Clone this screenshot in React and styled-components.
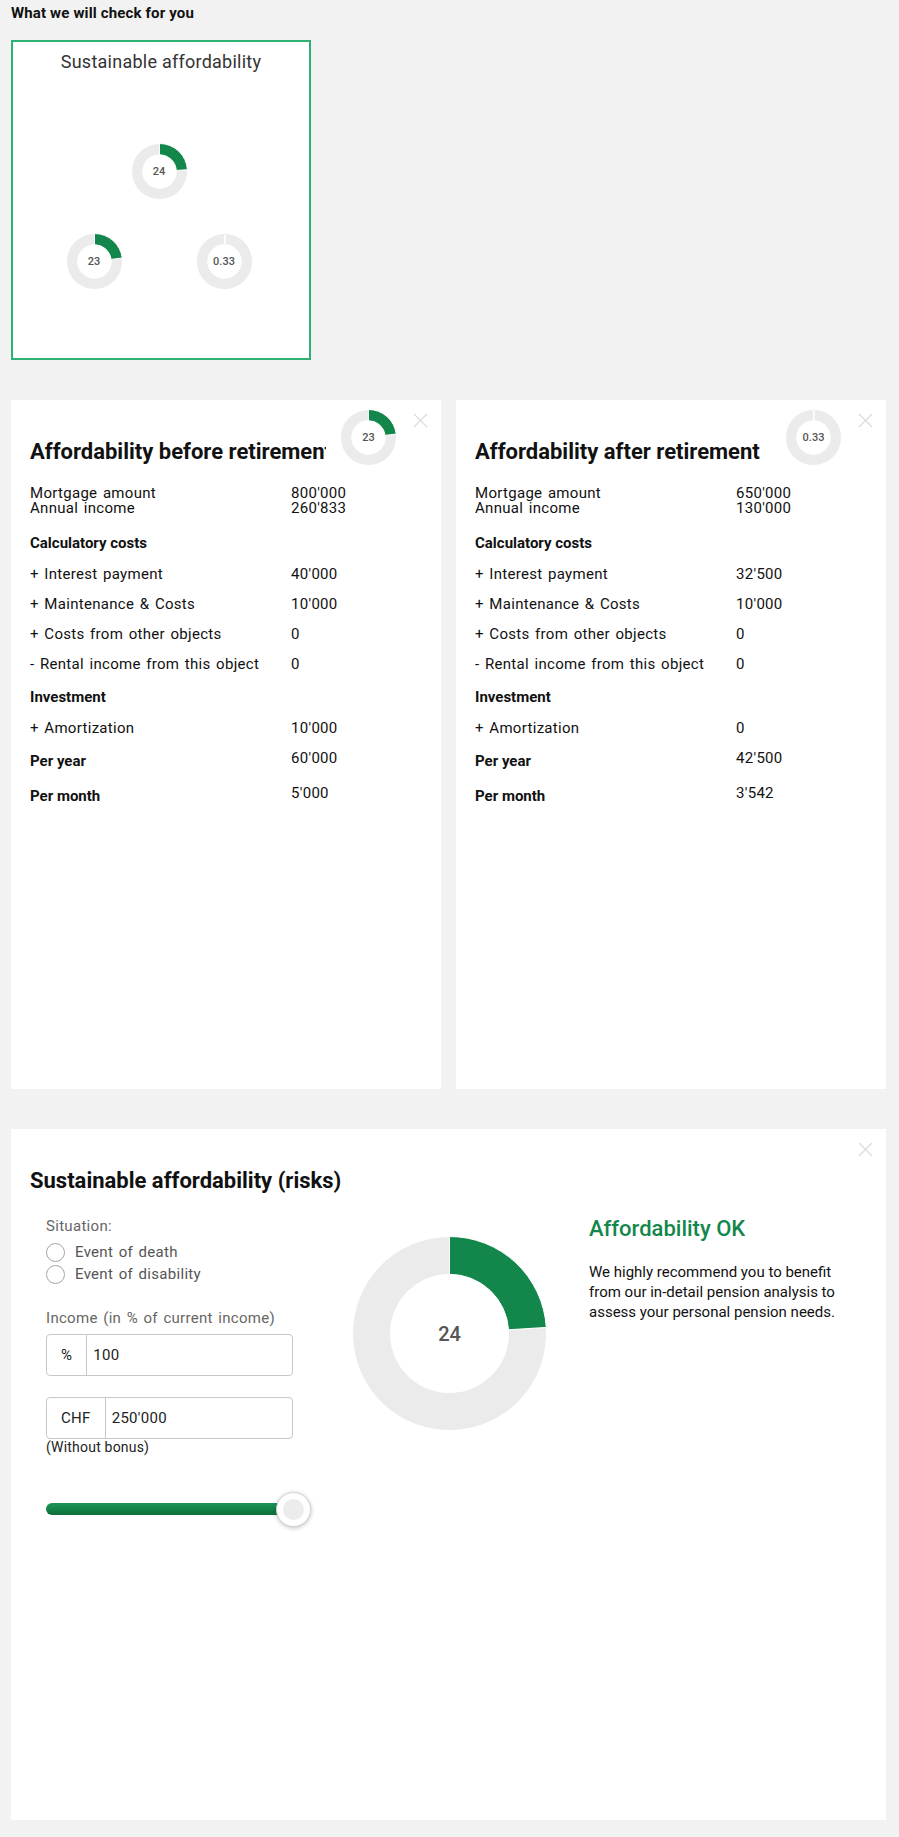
import React from "react";
import styled, { createGlobalStyle } from "styled-components";

const GREEN = "#13874b";
const RING = "#ebebeb";

const GlobalStyle = createGlobalStyle`
  html, body { margin: 0; padding: 0; background: #f2f2f2; }
  body { font-family: Roboto, "Liberation Sans", sans-serif; color: #111; }
  * { box-sizing: border-box; }
`;

const pt = (cx, cy, rad, deg) => {
  const a = (deg * Math.PI) / 180;
  return [cx + rad * Math.sin(a), cy - rad * Math.cos(a)];
};

function segment(cx, cy, ro, ri, a0, a1) {
  const large = a1 - a0 > 180 ? 1 : 0;
  const [x0, y0] = pt(cx, cy, ro, a0);
  const [x1, y1] = pt(cx, cy, ro, a1);
  const [x2, y2] = pt(cx, cy, ri, a1);
  const [x3, y3] = pt(cx, cy, ri, a0);
  return `M${x0} ${y0} A${ro} ${ro} 0 ${large} 1 ${x1} ${y1} L${x2} ${y2} A${ri} ${ri} 0 ${large} 0 ${x3} ${y3}Z`;
}

function Donut({ value, size, ratio = 0.6, fontSize, className }) {
  const c = size / 2;
  const ro = c - 0.5;
  const ri = ro * ratio;
  const angle = (Math.min(value, 100) / 100) * 360;
  return (
    <DonutWrap $size={size} className={className}>
      <svg width={size} height={size} viewBox={`0 0 ${size} ${size}`}>
        <path d={segment(c, c, ro, ri, angle, 359.99)} fill={RING} stroke="#fff" strokeWidth="1" />
        <path d={segment(c, c, ro, ri, 0, Math.max(angle, 0.01))} fill={GREEN} stroke="#fff" strokeWidth="1" />
      </svg>
      <DonutLabel $fontSize={fontSize}>{value}</DonutLabel>
    </DonutWrap>
  );
}

function CloseIcon() {
  return (
    <svg width="15" height="15" viewBox="0 0 15 15">
      <path d="M1 1 L14 14 M14 1 L1 14" stroke="#dcdcdc" strokeWidth="1.3" fill="none" />
    </svg>
  );
}

const rowsBefore = {
  title: "Affordability before retirement",
  score: 23,
  mortgage: "800'000",
  income: "260'833",
  interest: "40'000",
  maintenance: "10'000",
  other: "0",
  rental: "0",
  amortization: "10'000",
  year: "60'000",
  month: "5'000",
};

const rowsAfter = {
  title: "Affordability after retirement",
  score: 0.33,
  mortgage: "650'000",
  income: "130'000",
  interest: "32'500",
  maintenance: "10'000",
  other: "0",
  rental: "0",
  amortization: "0",
  year: "42'500",
  month: "3'542",
};

function AffordabilityCard({ data }) {
  return (
    <Card>
      <CornerDonut value={data.score} size={57} fontSize={11} />
      <CloseButton><CloseIcon /></CloseButton>
      <CardTitle>{data.title}</CardTitle>
      <Pair>
        <span>Mortgage amount</span>
        <span>{data.mortgage}</span>
        <span>Annual income</span>
        <span>{data.income}</span>
      </Pair>
      <SectionHead>Calculatory costs</SectionHead>
      <Row><span>+ Interest payment</span><span>{data.interest}</span></Row>
      <Row><span>+ Maintenance &amp; Costs</span><span>{data.maintenance}</span></Row>
      <Row><span>+ Costs from other objects</span><span>{data.other}</span></Row>
      <Row><span>- Rental income from this object</span><span>{data.rental}</span></Row>
      <SectionHead $top={2}>Investment</SectionHead>
      <Row><span>+ Amortization</span><span>{data.amortization}</span></Row>
      <TotalRow><strong>Per year</strong><span>{data.year}</span></TotalRow>
      <TotalRow><strong>Per month</strong><span>{data.month}</span></TotalRow>
    </Card>
  );
}

export default function App() {
  return (
    <Page>
      <GlobalStyle />
      <Heading>What we will check for you</Heading>
      <CheckCard>
        <CheckTitle>Sustainable affordability</CheckTitle>
        <Triangle>
          <DonutRow>
            <Donut value={24} size={57} fontSize={11} />
          </DonutRow>
          <DonutRow $gap={73}>
            <Donut value={23} size={57} fontSize={11} />
            <Donut value={0.33} size={57} fontSize={11} />
          </DonutRow>
        </Triangle>
      </CheckCard>

      <CardGrid>
        <AffordabilityCard data={rowsBefore} />
        <AffordabilityCard data={rowsAfter} />
      </CardGrid>

      <RiskCard>
        <CloseButton><CloseIcon /></CloseButton>
        <CardTitle $wide>Sustainable affordability (risks)</CardTitle>
        <RiskBody>
          <Form>
            <FieldLabel>Situation:</FieldLabel>
            <RadioList>
              <RadioRow><Radio />Event of death</RadioRow>
              <RadioRow><Radio />Event of disability</RadioRow>
            </RadioList>
            <FieldLabel $top={23}>Income (in % of current income)</FieldLabel>
            <InputGroup $top={6}>
              <Prefix>%</Prefix>
              <Value>100</Value>
            </InputGroup>
            <InputGroup $top={21}>
              <Prefix>CHF</Prefix>
              <Value>250'000</Value>
            </InputGroup>
            <Hint>(Without bonus)</Hint>
            <Slider>
              <Track />
              <Thumb><ThumbDot /></Thumb>
            </Slider>
          </Form>
          <BigDonut value={24} size={195} ratio={0.61} fontSize={20} />
          <Verdict>
            <VerdictTitle>Affordability OK</VerdictTitle>
            <VerdictText>
              We highly recommend you to benefit from our in-detail pension analysis to assess your personal pension needs.
            </VerdictText>
          </Verdict>
        </RiskBody>
      </RiskCard>
    </Page>
  );
}

const Page = styled.div`
  padding: 3px 13px 17px 11px;
`;

const Heading = styled.div`
  font-size: 15px;
  font-weight: 700;
  line-height: 20px;
  letter-spacing: 0.15px;
  color: #111;
`;

const CheckCard = styled.div`
  margin-top: 17px;
  width: 300px;
  height: 320px;
  background: #fff;
  border: 2px solid #2eb273;
  display: flex;
  flex-direction: column;
  align-items: center;
`;

const CheckTitle = styled.div`
  margin-top: 9px;
  font-size: 18px;
  line-height: 22px;
  letter-spacing: 0.25px;
  color: #333;
`;

const Triangle = styled.div`
  margin-top: 70px;
  display: flex;
  flex-direction: column;
  gap: 33px;
  margin-left: -4px;
`;

const DonutRow = styled.div`
  display: flex;
  justify-content: center;
  gap: ${(p) => p.$gap || 0}px;
`;

const DonutWrap = styled.div`
  position: relative;
  width: ${(p) => p.$size}px;
  height: ${(p) => p.$size}px;
  flex: none;
  svg { display: block; }
`;

const DonutLabel = styled.span`
  position: absolute;
  inset: 0;
  display: flex;
  align-items: center;
  justify-content: center;
  font-size: ${(p) => p.$fontSize}px;
  font-weight: 500;
  color: #555;
`;

const CornerDonut = styled(Donut)`
  position: absolute;
  top: 9px;
  right: 44px;
`;

const BigDonut = styled(Donut)`
  margin-top: 20px;
`;

const CardGrid = styled.div`
  margin-top: 40px;
  display: grid;
  grid-template-columns: 1fr 1fr;
  gap: 15px;
`;

const Card = styled.div`
  position: relative;
  background: #fff;
  height: 689px;
  padding: 39px 19px 0;
`;

const CloseButton = styled.div`
  position: absolute;
  top: 13px;
  right: 13px;
  width: 15px;
  height: 15px;
  svg { display: block; }
`;

const CardTitle = styled.div`
  font-size: 22px;
  font-weight: 700;
  line-height: 26px;
  color: #111;
  white-space: nowrap;
  overflow: hidden;
  max-width: ${(p) => (p.$wide ? "none" : "296px")};
`;

const bodyText = `
  font-size: 15px;
  letter-spacing: 0.3px;
  word-spacing: 1.5px;
`;

const Pair = styled.div`
  margin-top: 21px;
  display: grid;
  grid-template-columns: 261px 1fr;
  ${bodyText}
  line-height: 15px;
`;

const SectionHead = styled.div`
  margin-top: ${(p) => (p.$top !== undefined ? p.$top : 11)}px;
  font-size: 15px;
  font-weight: 700;
  line-height: 32px;
`;

const Row = styled.div`
  display: grid;
  grid-template-columns: 261px 1fr;
  ${bodyText}
  line-height: 30px;
`;

const TotalRow = styled.div`
  display: grid;
  grid-template-columns: 261px 1fr;
  font-size: 15px;
  height: 34px;
  margin-top: 1px;
  strong { font-weight: 700; line-height: 34px; }
  span { line-height: 28px; letter-spacing: 0.3px; }
`;

const RiskCard = styled.div`
  position: relative;
  margin-top: 40px;
  background: #fff;
  height: 691px;
  padding: 39px 19px 0;
`;

const RiskBody = styled.div`
  display: grid;
  grid-template-columns: 266px 195px 1fr;
  column-gap: 40px;
  padding-left: 16px;
  margin-top: 22px;
`;

const Form = styled.div`
  display: flex;
  flex-direction: column;
  align-items: flex-start;
`;

const FieldLabel = styled.div`
  margin-top: ${(p) => p.$top || 0}px;
  ${bodyText}
  line-height: 20px;
  color: #666;
`;

const RadioList = styled.div`
  margin-top: 5px;
`;

const RadioRow = styled.label`
  display: flex;
  align-items: center;
  gap: 10px;
  height: 22px;
  ${bodyText}
  color: #555;
`;

const Radio = styled.span`
  width: 19px;
  height: 19px;
  border-radius: 50%;
  border: 1px solid #a5a5a5;
  background: #fff;
`;

const InputGroup = styled.div`
  margin-top: ${(p) => p.$top}px;
  width: 247px;
  height: 42px;
  display: flex;
  border: 1px solid #c8c8c8;
  border-radius: 4px;
  ${bodyText}
  color: #222;
`;

const Prefix = styled.div`
  display: flex;
  align-items: center;
  padding: 0 14px;
  border-right: 1px solid #c8c8c8;
`;

const Value = styled.div`
  display: flex;
  align-items: center;
  padding: 0 6px;
`;

const Hint = styled.div`
  font-size: 14px;
  line-height: 16px;
  letter-spacing: 0.2px;
  color: #222;
`;

const Slider = styled.div`
  position: relative;
  margin-top: 48px;
  width: 247px;
  height: 12px;
`;

const Track = styled.div`
  height: 12px;
  border-radius: 6px;
  background: linear-gradient(#1d9457, #13844a 50%, #0d6c3a);
`;

const Thumb = styled.div`
  position: absolute;
  left: 230px;
  top: -11px;
  width: 35px;
  height: 35px;
  border-radius: 50%;
  background: #fff;
  border: 1px solid #d3d3d3;
  box-shadow: 0 1px 4px rgba(0, 0, 0, 0.25);
  display: flex;
  align-items: center;
  justify-content: center;
`;

const ThumbDot = styled.div`
  width: 21px;
  height: 21px;
  border-radius: 50%;
  background: #ececec;
`;

const Verdict = styled.div`
  padding-left: 2px;
`;

const VerdictTitle = styled.div`
  font-size: 22px;
  font-weight: 500;
  line-height: 26px;
  color: ${GREEN};
`;

const VerdictText = styled.p`
  margin: 20px 0 0;
  width: 270px;
  font-size: 15px;
  line-height: 20px;
  color: #111;
`;
